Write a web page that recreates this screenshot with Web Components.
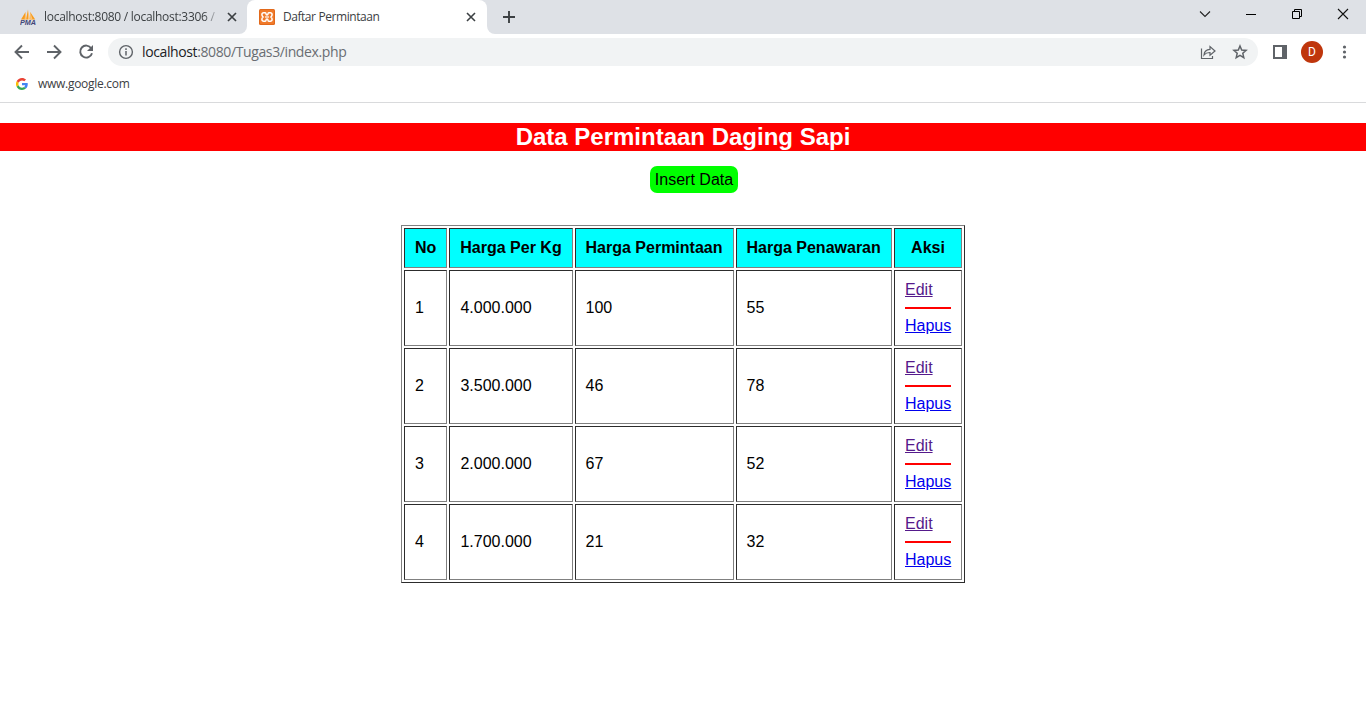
<!DOCTYPE html>
<html lang="id">
<head>
<meta charset="utf-8">
<title>Daftar Permintaan</title>
<style>
html,body{margin:0;height:100%;overflow:hidden;background:#fff}
</style>
</head>
<body>
<browser-window>
  <browser-tabs slot="tabs"></browser-tabs>
  <browser-toolbar slot="toolbar"></browser-toolbar>
  <bookmark-bar slot="bookmarks">www.google.com</bookmark-bar>
  <page-banner>Data Permintaan Daging Sapi</page-banner>
  <insert-button>Insert Data</insert-button>
  <demand-table></demand-table>
</browser-window>
<script>
function define(name, html) {
  const t = document.createElement('template');
  t.innerHTML = html;
  customElements.define(name, class extends HTMLElement {
    constructor() {
      super();
      this.attachShadow({mode: 'open'}).append(t.content.cloneNode(true));
    }
  });
}

define('browser-window', `<style>
:host{display:flex;flex-direction:column;width:1366px;height:728px;background:#fff;font-family:"Liberation Sans",Arial,sans-serif}
main{display:flex;flex-direction:column;align-items:center;padding-top:20px}
</style><slot name="tabs"></slot><slot name="toolbar"></slot><slot name="bookmarks"></slot><main><slot></slot></main>`);

define('browser-tabs', `<style>
:host{display:flex;height:34px;background:#dee1e6;font:12px/16px "Open Sans","Noto Sans",sans-serif;color:#3c4043}
svg{display:block;flex:none}
.tab{display:flex;align-items:center;box-sizing:border-box;height:34px}
.first{width:247px;padding-left:20px;border-radius:0 0 8px 0}
.label{flex:none;margin-left:8px;white-space:nowrap}
.first .label{width:173px;letter-spacing:-.28px;-webkit-mask-image:linear-gradient(90deg,#000 160px,transparent 176px)}
.first .x{margin-left:8px}
.corner{background:#dee1e6}
.active{width:240px;background:#fff;padding-left:12px;border-radius:8px 8px 0 0}
.active .label{width:173px;letter-spacing:-.46px;word-spacing:.4px}
.active .x{margin-left:8px}
.rest{flex:1;display:flex;background:#dee1e6;border-radius:0 0 0 8px}
.outer{display:flex;flex:1;background:linear-gradient(#dee1e6 0 17px,#fff 17px)}
.plus{margin:11px 0 0 16px}
.controls{display:flex;margin-left:auto}
.controls svg{width:46px;height:29px}
</style>
<div class="outer">
<div class="tab first corner">
<svg width="16" height="16" viewBox="0 0 16 16"><path d="M1 10.500 5.500 3v7.500zM6 10.500 8 0.500v10zM10.200 10.500V3l5 7.500z" fill="#f89c1c"/><path d="M4.500 10.500l1-7.500.8 7.500zM8 .5l2.200 10H8zM10.200 3l2.400 7.500h-2.400z" fill="#fbc277"/><text x="0" y="15.800" font-family="Liberation Sans" font-size="6.500" font-weight="700" font-style="italic" fill="#414578" textLength="16" lengthAdjust="spacingAndGlyphs">PMA</text></svg>
<span class="label">localhost:8080 / localhost:3306 /</span>
<svg class="x" width="14" height="14" viewBox="0 0 14 14"><path d="M3 3l8 8M11 3l-8 8" stroke="#3c4043" stroke-width="1.7"/></svg>
</div>
<div class="tab active">
<svg width="16" height="16" viewBox="0 0 16 16"><rect width="16" height="16" rx="1.500" fill="#e2691b"/><rect x="1" y="1" width="14" height="14" rx="1" fill="#f07a2a"/><path d="M4.800 3.800h1.400q.8 0 .8.900 0 1.300 1 1.300t1-1.300q0-.9.800-.9h1.400q1.900 0 1.900 2 0 1.300-1.200 2.200 1.200.9 1.200 2.200 0 2-1.900 2H9.800q-.8 0-.8-.9Q9 10 8 10t-1 1.300q0 .9-.8.9H4.800q-1.900 0-1.900-2Q2.900 8.900 4.100 8 2.900 7.100 2.900 5.800q0-2 1.900-2z" fill="none" stroke="#fff" stroke-width="1.500"/><path d="M6 8h4" stroke="#fff" stroke-width="1.200"/></svg>
<span class="label">Daftar Permintaan</span>
<svg class="x" width="14" height="14" viewBox="0 0 14 14"><path d="M3 3l8 8M11 3l-8 8" stroke="#3c4043" stroke-width="1.6"/></svg>
</div>
<div class="rest">
<svg class="plus" width="12" height="12" viewBox="0 0 12 12"><path d="M6 0v12M0 6h12" stroke="#3c4043" stroke-width="1.9"/></svg>
<div class="controls">
<svg viewBox="0 0 46 29"><path d="M18 11.5l5 5 5-5" fill="none" stroke="#222" stroke-width="1.1"/></svg>
<svg viewBox="0 0 46 29"><path d="M18 14.5h10" stroke="#000"/></svg>
<svg viewBox="0 0 46 29"><path d="M18.500 11.500h7v7h-7zM20.500 11.500v-2h7v7h-2" fill="none" stroke="#000"/></svg>
<svg viewBox="0 0 46 29"><path d="M18 9l10 10M28 9L18 19" stroke="#111" stroke-width="1.1"/></svg>
</div></div></div>`);

define('browser-toolbar', `<style>
:host{display:flex;align-items:center;height:36px;background:#fff;padding-left:14px;font:14px/18px "Open Sans","Noto Sans",sans-serif}
svg{display:block;flex:none;fill:none;stroke:#5f6368}
.nav{width:16px;height:16px;margin-right:16px}
.bar{display:flex;align-items:center;box-sizing:border-box;width:1150px;height:28px;margin-left:-2px;border-radius:14px;background:#f1f3f4;padding:0 10px}
.url{margin-left:8px;color:#696d72;white-space:nowrap;letter-spacing:-.385px}
.url b{font-weight:400;color:#202124}
.share{margin-left:auto}
.star{margin-left:16px}
.panel{margin-left:15px}
.avatar{width:22px;height:22px;margin-left:14px;border-radius:50%;background:#bf360c;color:#fff;font:12px/22px Roboto,sans-serif;text-align:center}
.menu{margin-left:13px}
</style>
<svg class="nav" viewBox="0 0 16 16" stroke-width="1.9"><path d="M15 8H2M8 1.500 1.500 8 8 14.500"/></svg>
<svg class="nav" viewBox="0 0 16 16" stroke-width="1.9"><path d="M1 8h13M8 1.500 14.500 8 8 14.500"/></svg>
<svg class="nav" viewBox="0 0 16 16" stroke-width="1.9"><path d="M13.200 4.200A6 6 0 1 0 14 9.200"/><path d="M15 1v6H9z" fill="#5f6368" stroke="none"/></svg>
<div class="bar">
<svg width="16" height="16" viewBox="0 0 16 16"><circle cx="8" cy="8" r="6.400" stroke-width="1.400"/><path d="M8 7v4.500M8 4.300v1.600" stroke-width="1.500"/></svg>
<span class="url"><b>localhost</b>:8080/Tugas3/index.php</span>
<svg class="share" width="16" height="16" viewBox="0 0 16 16" stroke-width="1.200"><path d="M1.500 4.500v10h11v-2.500"/><path d="M4 11q.4-5.500 6-5.700V2.500L15 7l-5 4.200V8.500Q6 8.400 4 11z"/></svg>
<svg class="star" width="16" height="16" viewBox="0 0 16 16" stroke-width="1.500"><path d="M8 2l1.700 4 4.400.4-3.300 2.900 1 4.300L8 11.300l-3.800 2.300 1-4.300L1.900 6.400 6.300 6z"/></svg>
</div>
<svg class="panel" width="14" height="14" viewBox="0 0 14 14"><path d="M0 0h14v14H0zM2 2v10h7V2z" fill="#5f6368" stroke="none" fill-rule="evenodd"/></svg>
<span class="avatar">D</span>
<svg class="menu" width="16" height="16" viewBox="0 0 16 16"><g fill="#5f6368" stroke="none"><circle cx="8.500" cy="3" r="1.600"/><circle cx="8.500" cy="8" r="1.600"/><circle cx="8.500" cy="13" r="1.600"/></g></svg>`);

define('bookmark-bar', `<style>
:host{display:flex;align-items:center;box-sizing:border-box;height:33px;padding:0 0 5px 16px;border-bottom:1px solid #d9dadc;color:#3c4043;font:12px/16px "Open Sans","Noto Sans",sans-serif;letter-spacing:-.28px}
svg{display:block;margin-right:10px}
</style><svg width="12" height="12" viewBox="0 0 48 48"><path fill="#EA4335" d="M24 9.500c3.500 0 6.700 1.200 9.200 3.600l6.900-6.900C35.900 2.400 30.500 0 24 0 14.600 0 6.500 5.400 2.600 13.200l8 6.200C12.400 13.700 17.700 9.500 24 9.500z"/><path fill="#4285F4" d="M47 24.600c0-1.600-.2-3.100-.4-4.600H24v9h12.900c-.6 3-2.200 5.500-4.700 7.200l7.700 6C44.400 38 47 31.800 47 24.600z"/><path fill="#FBBC05" d="M10.500 28.600a14.500 14.500 0 0 1 0-9.200l-8-6.200a24 24 0 0 0 0 21.600z"/><path fill="#34A853" d="M24 48c6.500 0 11.900-2.100 15.900-5.800l-7.700-6c-2.200 1.500-4.900 2.300-8.200 2.300-6.300 0-11.600-4.200-13.500-9.900l-8 6.200C6.500 42.600 14.600 48 24 48z"/></svg><slot></slot>`);

define('page-banner', `<style>
:host{display:block;width:100%;height:28px;background:red;color:#fff}
h2{margin:0;font-size:24px;line-height:28px;text-align:center}
</style><h2><slot></slot></h2>`);

define('insert-button', `<style>
:host{display:block;margin:15px 0 0 22px}
a{display:block;height:27px;padding:0 5px;border-radius:7px;background:lime;color:#000;font-size:16px;line-height:27px;white-space:nowrap}
</style><a><slot></slot></a>`);

const rows = [['1','4.000.000','100','55'],['2','3.500.000','46','78'],['3','2.000.000','67','52'],['4','1.700.000','21','32']];
define('demand-table', `<style>
:host{display:block;margin-top:32px}
table{width:564px;table-layout:fixed;border-collapse:separate;border-spacing:2px;border:1px solid;border-color:#808080 #2c2c2c #2c2c2c #808080;font-size:16px;line-height:18px;color:#000}
th,td{box-sizing:border-box;padding:10px;border:1px solid;border-color:#2c2c2c #808080 #808080 #2c2c2c;text-align:left;white-space:nowrap}
th{background:aqua;height:40px;text-align:center}
td{height:76px}
td:nth-child(2){padding-left:10.400px}
td:nth-child(3),td:nth-child(4){padding-left:9.500px}
th:nth-child(3),th:nth-child(4){padding:10px 10.500px 10px 9.500px}
hr{margin:8px 0;border:0;height:2px;background:red}
a{display:block;width:max-content;text-decoration:underline;color:#00e}
.seen{color:#551a8b}
</style><table><colgroup><col style="width:43px"><col style="width:124px"><col style="width:159px"><col style="width:156px"><col style="width:68px"></colgroup>
<thead><tr><th>No</th><th>Harga Per Kg</th><th>Harga Permintaan</th><th>Harga Penawaran</th><th>Aksi</th></tr></thead>
<tbody>${rows.map(r => `<tr>${r.map(c => `<td>${c}</td>`).join('')}<td><a class="seen">Edit</a><hr><a>Hapus</a></td></tr>`).join('')}</tbody></table>`);
</script>
</body>
</html>
